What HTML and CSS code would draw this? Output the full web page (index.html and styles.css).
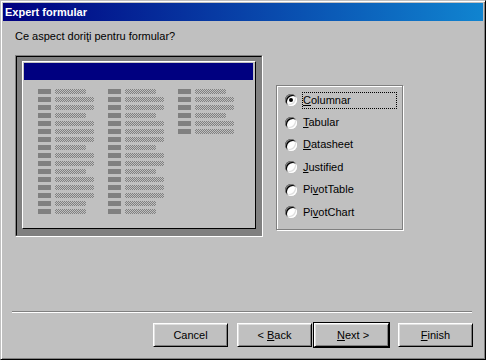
FILE: index.html
```html
<html>
<head>
  <meta name="viewport" content="width=device-width, initial-scale=1.0">
  <link rel="stylesheet" href="styles.css">
</head>
<body>
  <div class="window">
    <div class="titlebar">Expert formular</div>

    <div class="prompt">Ce aspect doriţi pentru formular?</div>

    <div class="main">
      <!-- preview of the form layout -->
      <div class="preview">
        <div class="well">
          <div class="panel">
            <div class="panel-head"></div>
            <div class="fields">
              <div class="col">
                <div class="f"><i class="l"></i><i class="d"></i></div>
                <div class="f"><i class="l"></i><i class="d long"></i></div>
                <div class="f"><i class="l"></i><i class="d long"></i></div>
                <div class="f"><i class="l"></i><i class="d"></i></div>
                <div class="f"><i class="l"></i><i class="d long"></i></div>
                <div class="f"><i class="l"></i><i class="d long"></i></div>
                <div class="f"><i class="l"></i><i class="d long"></i></div>
                <div class="f"><i class="l"></i><i class="d"></i></div>
                <div class="f"><i class="l"></i><i class="d long"></i></div>
                <div class="f"><i class="l"></i><i class="d long"></i></div>
                <div class="f"><i class="l"></i><i class="d"></i></div>
                <div class="f"><i class="l"></i><i class="d long"></i></div>
                <div class="f"><i class="l"></i><i class="d long"></i></div>
                <div class="f"><i class="l"></i><i class="d long"></i></div>
                <div class="f"><i class="l"></i><i class="d"></i></div>
                <div class="f"><i class="l"></i><i class="d"></i></div>
              </div>
              <div class="col">
                <div class="f"><i class="l"></i><i class="d"></i></div>
                <div class="f"><i class="l"></i><i class="d long"></i></div>
                <div class="f"><i class="l"></i><i class="d long"></i></div>
                <div class="f"><i class="l"></i><i class="d"></i></div>
                <div class="f"><i class="l"></i><i class="d long"></i></div>
                <div class="f"><i class="l"></i><i class="d long"></i></div>
                <div class="f"><i class="l"></i><i class="d long"></i></div>
                <div class="f"><i class="l"></i><i class="d"></i></div>
                <div class="f"><i class="l"></i><i class="d long"></i></div>
                <div class="f"><i class="l"></i><i class="d long"></i></div>
                <div class="f"><i class="l"></i><i class="d"></i></div>
                <div class="f"><i class="l"></i><i class="d long"></i></div>
                <div class="f"><i class="l"></i><i class="d long"></i></div>
                <div class="f"><i class="l"></i><i class="d long"></i></div>
                <div class="f"><i class="l"></i><i class="d"></i></div>
                <div class="f"><i class="l"></i><i class="d"></i></div>
              </div>
              <div class="col">
                <div class="f"><i class="l"></i><i class="d"></i></div>
                <div class="f"><i class="l"></i><i class="d long"></i></div>
                <div class="f"><i class="l"></i><i class="d long"></i></div>
                <div class="f"><i class="l"></i><i class="d"></i></div>
                <div class="f"><i class="l"></i><i class="d long"></i></div>
                <div class="f"><i class="l"></i><i class="d long"></i></div>
              </div>
            </div>
          </div>
        </div>
      </div>

      <!-- layout choices -->
      <div class="options">
        <div class="opt"><span class="radio on"></span><span class="text focus"><u>C</u>olumnar</span></div>
        <div class="opt"><span class="radio"></span><span class="text"><u>T</u>abular</span></div>
        <div class="opt"><span class="radio"></span><span class="text"><u>D</u>atasheet</span></div>
        <div class="opt"><span class="radio"></span><span class="text"><u>J</u>ustified</span></div>
        <div class="opt"><span class="radio"></span><span class="text">Pi<u>v</u>otTable</span></div>
        <div class="opt"><span class="radio"></span><span class="text">Pi<u>v</u>otChart</span></div>
      </div>
    </div>

    <div class="sep"></div>

    <div class="buttons">
      <button class="btn cancel">Cancel</button>
      <button class="btn back">&lt; <u>B</u>ack</button>
      <div class="default-frame"><button class="btn">&nbsp;<u>N</u>ext &gt;</button></div>
      <button class="btn"><u>F</u>inish</button>
    </div>
  </div>
</body>
</html>
```

FILE: styles.css
```css
body {
  margin: 0;
  background: #c0c0c0;
  font-family: "Liberation Sans", Arial, sans-serif;
  font-size: 11px;
  color: #000;
}

/* window frame */
.window {
  width: 486px;
  height: 360px;
  box-sizing: border-box;
  border: 1px solid;
  border-color: #c0c0c0 #000 #000 #c0c0c0;
  box-shadow: inset 1px 1px #fff, inset -1px -1px #808080;
  padding: 2px;
  background: #c0c0c0;
}
.titlebar {
  height: 18px;
  line-height: 18px;
  padding-left: 2px;
  background: linear-gradient(to right, #000080, #1084d0);
  color: #fff;
  font-weight: bold;
}

.prompt {
  margin: 9px 0 0 12px;
  line-height: 13px;
}

.main {
  display: flex;
  align-items: flex-start;
  margin: 12px 0 0 12px;
}

/* preview picture */
.preview {
  border: 1px solid;
  border-color: #808080 #fff #fff #808080;
}
.well {
  border: 1px solid;
  border-color: #000 #808080 #808080 #000;
  background: #808080;
  padding: 4px 5px 6px 5px;
}
.panel {
  width: 232px;
  height: 166px;
  border: 1px solid;
  border-color: #fff #000 #000 #fff;
  background: #c0c0c0;
}
.panel-head {
  height: 17px;
  margin: 1px 2px 0 1px;
  background: #000080;
}
.fields {
  display: flex;
  gap: 14px;
  padding: 9px 0 0 15px;
}
.col {
  width: 56px;
  display: flex;
  flex-direction: column;
  gap: 3px;
}
.f {
  display: flex;
  gap: 4px;
  height: 5px;
}
.f .l {
  width: 13px;
  background: #808080;
}
.f .d {
  width: 31px;
  background: repeating-conic-gradient(#808080 0 25%, #c0c0c0 0 50%) 0 0 / 2px 2px;
}
.f .d.long {
  width: 39px;
}

/* option group */
.options {
  margin: 30px 0 0 13px;
  width: 127px;
  height: 145px;
  box-sizing: border-box;
  border: 1px solid #808080;
  box-shadow: inset 1px 1px #fff, 1px 1px #fff;
  padding: 3px 0 0 8px;
}
.opt {
  display: flex;
  align-items: center;
  height: 22.4px;
}
.radio {
  flex: none;
  position: relative;
  width: 12px;
  height: 12px;
  border-radius: 50%;
  background: #fff;
  box-shadow: inset 1px 1px #808080, inset -1px -1px #fff, inset 2px 2px #000, inset -2px -2px #dfdfdf;
}
.radio.on::after {
  content: "";
  position: absolute;
  left: 4px;
  top: 4px;
  width: 4px;
  height: 4px;
  border-radius: 50%;
  background: #000;
}
.text {
  margin-left: 5px;
  height: 17px;
  line-height: 15px;
  border: 1px solid transparent;
  box-sizing: border-box;
}
.text.focus {
  width: 95px;
  border: 1px dotted #000;
}

.sep {
  margin: 74px 0 0 9px;
  width: 460px;
  height: 1px;
  background: #808080;
  border-bottom: 1px solid #fff;
}

/* buttons */
.buttons {
  display: flex;
  margin: 10px 0 0 150px;
}
.btn {
  width: 75px;
  height: 24px;
  box-sizing: border-box;
  padding: 0;
  border: 1px solid;
  border-color: #fff #000 #000 #fff;
  box-shadow: inset 1px 1px #dfdfdf, inset -1px -1px #808080;
  background: #c0c0c0;
  font: inherit;
  color: #000;
  text-align: center;
}
.btn.cancel {
  margin-right: 9px;
}
.btn.back {
  margin-right: 1px;
}
.default-frame {
  display: flex;
  border: 1px solid #000;
  margin-top: -1px;
  margin-right: 8px;
}
```
